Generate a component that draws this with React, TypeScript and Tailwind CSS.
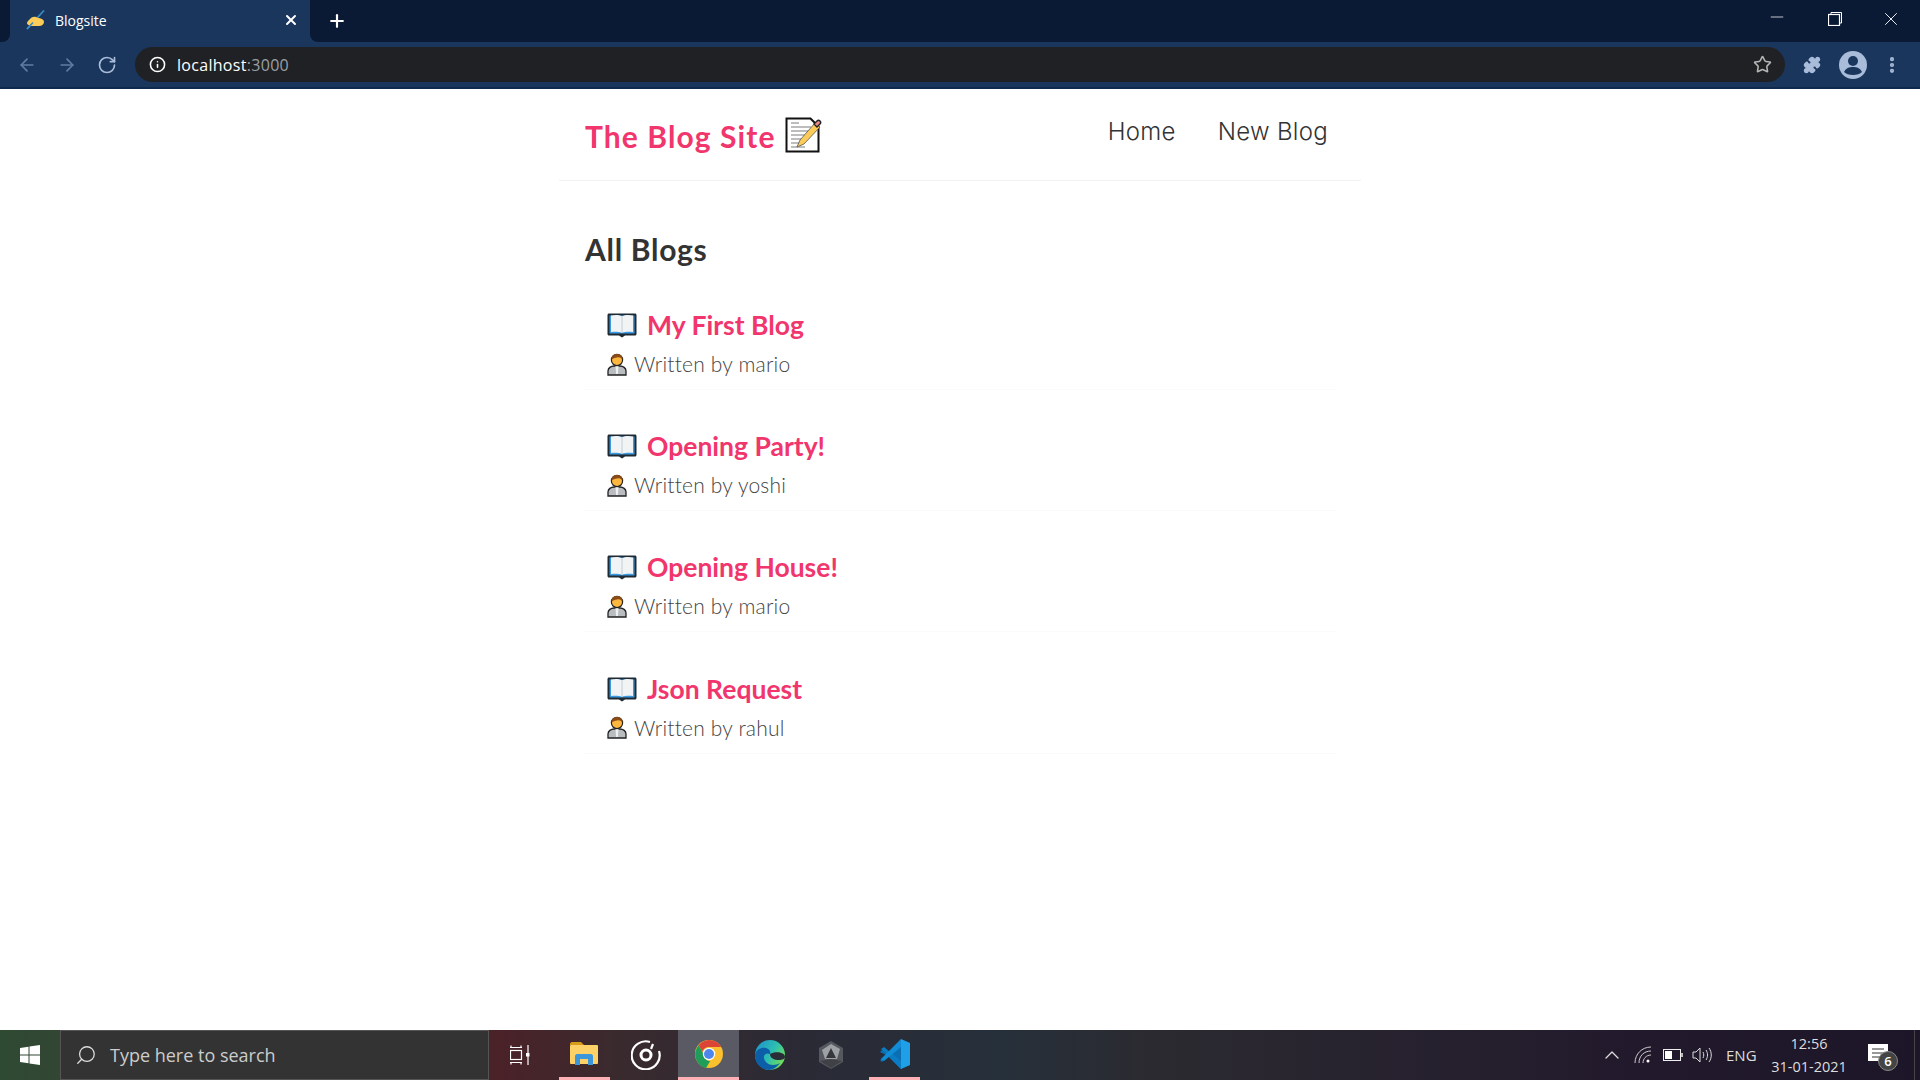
import React from "react";
import {
  ArrowLeft,
  ArrowRight,
  RotateCw,
  Info,
  Star,
  Puzzle,
  EllipsisVertical,
  X,
  Plus,
  Minus,
  ChevronUp,
  Search,
} from "lucide-react";

const blogs = [
  { id: 1, title: "My First Blog", author: "mario" },
  { id: 2, title: "Opening Party!", author: "yoshi" },
  { id: 3, title: "Opening House!", author: "mario" },
  { id: 4, title: "Json Request", author: "rahul" },
];

const WritingHand = () => (
  <svg width="20" height="20" viewBox="0 0 20 20">
    <path d="M1 19 L18 0.5" stroke="#3b88c3" strokeWidth="1.8" />
    <path
      d="M3 10c2-3 5-4 7-3l2 1c2 0 6 1 6 4 0 2-2 4-5 4H7c-3 0-6-1-6-3 0-1 1-2 2-3z"
      fill="#fdcb58"
    />
    <path d="M1 19 L7 12.5" stroke="#3b88c3" strokeWidth="1.6" />
  </svg>
);

const MemoEmoji = () => (
  <svg width="37" height="36" viewBox="0 0 37 36">
    <path d="M1.5 1.5h24l8 8v25h-32z" fill="#fff" stroke="#111" strokeWidth="2" />
    <g stroke="#a8a8a8" strokeWidth="1.5">
      <path d="M6 6h8M6 10h20M6 14h22M6 18h14M6 22h12M6 26h10M6 30h14" />
    </g>
    <path d="M12 30l3-7L30 6l5 4-16 17z" fill="#fdcb58" stroke="#555" strokeWidth="0.8" />
    <path d="M29 7l3-3c1-1 2-1 3 0s1 2 0 3l-3 3z" fill="#ea8a8a" stroke="#222" strokeWidth="1.4" />
  </svg>
);

const BookEmoji = () => (
  <svg width="30" height="26" viewBox="0 0 30 26">
    <path d="M2 1.500h26c.8 0 1.500.7 1.500 1.500v19c0 .8-.7 1.500-1.500 1.500H18l-3 2-3-2H2c-.8 0-1.500-.7-1.500-1.500V3c0-.8.7-1.500 1.500-1.500z" fill="#1f2a33" />
    <path d="M2.500 3.500h25v18h-25z" fill="#3b9ae1" />
    <path d="M4 3.500c4-.8 8-.8 11 .8 3-1.600 7-1.600 11-.8v16.500c-4-.6-8-.4-11 .8-3-1.200-7-1.400-11-.8z" fill="#f1f3f5" />
    <path d="M15 4.300v16.500" stroke="#c3ccd3" strokeWidth="1" />
  </svg>
);

const PersonEmoji = () => (
  <svg width="20" height="23" viewBox="0 0 20 23">
    <path d="M1 22v-4c0-3 3-5 6-5h6c3 0 6 2 6 5v4z" fill="#b9bdc0" stroke="#222" strokeWidth="1.3" />
    <path d="M8.500 13h3l-.6 8h-1.800z" fill="#eef0f0" />
    <circle cx="10" cy="7" r="5.600" fill="#fdb73f" stroke="#222" strokeWidth="1.200" />
    <path d="M4.500 6.500C4 3 7 1 10 1s6 2 5.500 5.500C14 4.500 12 4 10 4.500 8 5 6 5 4.500 6.500z" fill="#8a4b16" />
  </svg>
);

const ChromeLogo = () => (
  <svg width="28" height="28" viewBox="0 0 28 28">
    <circle cx="14" cy="14" r="14" fill="#fbc02d" />
    <path d="M14 0a14 14 0 0 1 12.100 7H14a7 7 0 0 0-6.600 4.700L3.600 5.200A14 14 0 0 1 14 0z" fill="#db4437" />
    <path d="M3.600 5.200l6 10.600a5 5 0 0 0 5.600 5.100L11 28a14 14 0 0 1-7.400-22.800z" fill="#1e9e58" />
    <circle cx="14" cy="14" r="6.200" fill="#fff" />
    <circle cx="14" cy="14" r="5" fill="#4f86ec" />
  </svg>
);

const EdgeLogo = () => (
  <svg width="30" height="30" viewBox="0 0 30 30">
    <defs>
      <linearGradient id="edgeA" x1="0" y1="0" x2="1" y2="0.6">
        <stop offset="0" stopColor="#1b8fd3" />
        <stop offset="0.6" stopColor="#2dbfb0" />
        <stop offset="1" stopColor="#6fdc5a" />
      </linearGradient>
    </defs>
    <circle cx="15" cy="15" r="15" fill="url(#edgeA)" />
    <path d="M0 15c1-6 7-8 11-7 3 1 5 3 4 6-2-1-5-1-6 2-1 5 4 9 9 9 3 0 5-1 7-2-3 4-7 7-11 7C6 30 0 23 0 15z" fill="#0c5ea8" />
    <path d="M15 14c5-3 15-2 15 3 0 2-3 3-6 3-5 0-9-2-9-6z" fill="#2a2c38" />
  </svg>
);

const VsCodeLogo = () => (
  <svg width="30" height="30" viewBox="0 0 30 30">
    <path d="M21 0l9 4v22l-9 4-12-13 12-9V8z" fill="#1e9fe8" />
    <path d="M21 0v30L2 11l-2 2 6 3-6 5 2 2 7-6 12 13 0-7L12 15l9-7z" fill="#0b6fb3" />
    <path d="M1 10l3-2 17 14v8z" fill="#0a7cc4" />
    <path d="M1 20l3 2L21 8V0z" fill="#108dd6" />
  </svg>
);

const FolderLogo = () => (
  <svg width="28" height="24" viewBox="0 0 28 24">
    <path d="M0 2c0-1 1-2 2-2h9l3 3H0z" fill="#d99c18" />
    <rect x="0" y="3" width="28" height="19" rx="1" fill="#fcd268" />
    <path d="M5 23v-9c0-1 1-2 2-2h14c1 0 2 1 2 2v9h-5v-6h-8v6z" fill="#3b97d9" />
  </svg>
);

const GameLogo = () => (
  <svg width="28" height="28" viewBox="0 0 28 28">
    <path d="M14 0l12 7v14l-12 7-12-7V7z" fill="#55585e" />
    <path d="M14 3l9 5-3 10H8L5 9z" fill="#9ea2a6" />
    <path d="M14 7l5 10H9z" fill="#35373d" />
    <path d="M3 20l11 7 11-7-11-2z" fill="#3f4147" />
  </svg>
);

const App = () => {
  return (
    <div className="flex h-screen flex-col overflow-hidden bg-white font-['Lato',sans-serif]">
      {/* browser chrome */}
      <div className="bg-[#1a365d]">
        <div className="flex h-[42px]">
          <div className="w-[10px] rounded-br-lg bg-[#0a1a35]" />
          <div className="flex w-[300px] items-center rounded-t-lg pb-[2px] pl-[16px] pr-[11px]">
            <WritingHand />
            <span className="ml-[9px] flex-1 font-['Open_Sans',sans-serif] text-[14px] text-white">Blogsite</span>
            <X className="h-[16px] w-[16px] text-white" strokeWidth={3} />
          </div>
          <div className="flex flex-1 items-center rounded-bl-lg bg-[#0a1a35] pl-[17px]">
            <Plus className="h-[20px] w-[20px] text-white" strokeWidth={2.6} />
            <div className="ml-auto flex h-full items-start pr-[1px] text-white">
              <div className="flex w-[58px] justify-center pt-[7px]">
                <Minus className="h-[20px] w-[20px]" strokeWidth={0.9} />
              </div>
              <div className="flex w-[57px] justify-center pt-[12px]">
                <svg width="14" height="14" viewBox="0 0 14 14" fill="none" stroke="currentColor">
                  <rect x="0.5" y="2.5" width="11" height="11" strokeWidth="1.2" />
                  <path d="M3 2.500V.5h10.500v10.500h-2" strokeWidth="1" />
                </svg>
              </div>
              <div className="flex w-[56px] justify-center pt-[8px]">
                <X className="h-[22px] w-[22px]" strokeWidth={1} />
              </div>
            </div>
          </div>
        </div>
        <div className="flex h-[45px] items-center">
          <div className="flex w-[135px] items-center pl-[17px]">
            <ArrowLeft className="h-[20px] w-[20px] text-[#5f7da3]" strokeWidth={2} />
            <ArrowRight className="ml-[20px] h-[20px] w-[20px] text-[#5f7da3]" strokeWidth={2} />
            <RotateCw className="ml-[20px] h-[20px] w-[20px] text-[#a9bcd9]" strokeWidth={2} />
          </div>
          <div className="flex h-[35px] w-[1650px] items-center rounded-full bg-[#202124] pl-[14px] pr-[13px]">
            <Info className="h-[17px] w-[17px] text-white" strokeWidth={2.2} />
            <span className="ml-[11px] flex-1 font-['Open_Sans',sans-serif] text-[16px] tracking-[0.3px] text-white">
              localhost<span className="text-[#9aa0a6]">:3000</span>
            </span>
            <Star className="h-[19px] w-[19px] text-[#b5b5b5]" strokeWidth={2} />
          </div>
          <div className="flex flex-1 items-center pl-[18px]">
            <Puzzle className="h-[18px] w-[18px] fill-[#a9bcd9] text-[#a9bcd9]" />
            <svg className="ml-[18px]" width="28" height="28" viewBox="0 0 28 28">
              <circle cx="14" cy="14" r="14" fill="#a9bcd9" />
              <circle cx="14" cy="10" r="5" fill="#1a365d" />
              <path d="M5 21c2-4 5-5 9-5s7 1 9 5c-2 2-5 3-9 3s-7-1-9-3z" fill="#1a365d" />
            </svg>
            <EllipsisVertical className="ml-[15px] h-[20px] w-[20px] text-[#a9bcd9]" strokeWidth={3} />
          </div>
        </div>
        <div className="h-[2px] bg-[#102a4d]" />
      </div>

      {/* page */}
      <div className="flex-1">
        <div className="mx-auto w-[802px]">
          <nav className="flex h-[92px] items-start justify-between border-b border-[#f2f2f2] pl-[26px] pr-[33px]">
            <h1 className="mt-[28px] flex items-center text-[30px] font-bold leading-[38px] tracking-[1.1px] text-[#f1356d]">
              The Blog Site
              <span className="ml-[9px] -mt-[2px]"><MemoEmoji /></span>
            </h1>
            <div className="mt-[27px] flex gap-[42px] font-['Inter',sans-serif] text-[24px] font-light leading-[32px] tracking-[0.3px] text-[#333]">
              <a>Home</a>
              <a>New Blog</a>
            </div>
          </nav>
          <main className="px-[25px] pt-[49px]">
            <h2 className="ml-[1px] text-[30px] font-bold leading-[38px] tracking-[0.7px] text-[#333]">All Blogs</h2>
            <div className="mt-[41px]">
              {blogs.map((blog) => (
                <div key={blog.id} className="mb-[40.2px] border-b border-[#fafafa] px-[23px] pb-[13px]">
                  <div className="flex h-[32px] items-center">
                    <BookEmoji />
                    <h3 className="ml-[10px] text-[26.5px] font-bold leading-[32px] text-[#f1356d]">{blog.title}</h3>
                  </div>
                  <div className="mt-[11px] flex h-[24px] items-center">
                    <PersonEmoji />
                    <p className="ml-[7px] text-[21px] font-light leading-[24px] tracking-[0.2px] text-[#444]">Written by {blog.author}</p>
                  </div>
                </div>
              ))}
            </div>
          </main>
        </div>
      </div>

      {/* taskbar */}
      <div className="flex h-[50px] items-stretch bg-[linear-gradient(90deg,#2f4a33_0%,#3a3a34_12%,#4a2228_26%,#3a2a2e_32%,#2a2a35_42%,#26303a_52%,#2b2a30_60%,#221a2c_85%,#1c1628_100%)] font-['Open_Sans',sans-serif] text-white">
        <div className="flex w-[60px] items-center justify-center">
          <svg width="20" height="20" viewBox="0 0 20 20" fill="#fff">
            <path d="M0 3l8.500-1.300V9.500H0zM9.500 1.500L20 0v9.500H9.500zM0 10.500h8.500v7.800L0 17zM9.500 10.500H20V20L9.500 18.500z" />
          </svg>
        </div>
        <div className="flex w-[429px] items-center border border-[#555] bg-[#333] pl-[14px]">
          <Search className="h-[22px] w-[22px] -scale-x-100 text-[#ddd]" strokeWidth={1.4} />
          <span className="ml-[13px] text-[18px] text-[#ccc]">Type here to search</span>
        </div>
        <div className="flex w-[70px] items-center pl-[21px]">
          <svg width="20" height="20" viewBox="0 0 20 20" fill="none" stroke="#fff" strokeWidth="1.2">
            <path d="M0 2.500h12M0 17.500h12M1 0.500v2M11 0.500v2M1 17.500v2M11 17.500v2" />
            <rect x="0.5" y="5.5" width="11" height="9" />
            <path d="M18 0v20" strokeWidth="1.2" />
            <rect x="16" y="8" width="3.5" height="3.5" fill="#fff" stroke="none" />
          </svg>
        </div>
        <div className="flex w-[51px] items-center justify-center border-b-[3px] border-[#ffb0b4] pr-[2px]">
          <FolderLogo />
        </div>
        <div className="flex w-[68px] items-center justify-center pl-[4px]">
          <svg width="30" height="30" viewBox="0 0 30 30" fill="none" stroke="#fff" strokeWidth="2.2">
            <path d="M19 2a14 14 0 1 0 9 9" />
            <circle cx="15" cy="15" r="5" strokeWidth="3" />
            <path d="M22 4l-2 5" />
          </svg>
        </div>
        <div className="flex w-[61px] items-center justify-center border-b-[3px] border-[#ffb0b4] bg-[#5a5a64]">
          <ChromeLogo />
        </div>
        <div className="flex w-[62px] items-center justify-center">
          <EdgeLogo />
        </div>
        <div className="flex w-[68px] items-center justify-center pr-[8px]">
          <GameLogo />
        </div>
        <div className="flex w-[51px] items-center justify-center border-b-[3px] border-[#ffb0b4]">
          <VsCodeLogo />
        </div>
        <div className="flex flex-1 items-center justify-end">
          <ChevronUp className="h-[24px] w-[24px] text-[#ddd]" strokeWidth={1.3} />
          <svg className="ml-[10px]" width="18" height="18" viewBox="0 0 18 18" fill="none" stroke="#ccc" strokeWidth="1">
            <path d="M1 17C1 8 8 1 17 1M5 17c0-7 5-12 12-12M9 17c0-4 3-8 8-8" />
            <circle cx="14" cy="15" r="1.5" fill="#fff" stroke="none" />
          </svg>
          <svg className="ml-[11px]" width="20" height="12" viewBox="0 0 20 12" fill="none" stroke="#eee" strokeWidth="1">
            <rect x="0.5" y="0.5" width="17" height="11" />
            <rect x="2" y="2" width="7" height="8" fill="#fff" stroke="none" />
            <path d="M19 4v4" strokeWidth="1.5" />
          </svg>
          <svg className="ml-[9px]" width="21" height="16" viewBox="0 0 21 16" fill="none" stroke="#ddd" strokeWidth="1">
            <path d="M1 5h3l4-4v14l-4-4H1z" />
            <path d="M11 5c1 2 1 4 0 6M14 3c2 3 2 7 0 10M17 1c3 4 3 10 0 14" />
          </svg>
          <span className="ml-[13px] w-[36px] text-[15px] text-[#ddd]">ENG</span>
          <div className="ml-[8px] flex w-[78px] flex-col items-center text-[14.5px] leading-[23px] text-[#ddd]">
            <span>12:56</span>
            <span>31-01-2021</span>
          </div>
          <div className="relative ml-[20px] mr-[26px] h-[22px] w-[20px] self-center">
            <svg width="20" height="20" viewBox="0 0 20 20">
              <path d="M0 0h20v17H0z" fill="#fff" />
              <path d="M4 5h12M4 9h12M4 13h8" stroke="#333" strokeWidth="1" />
            </svg>
            <span className="absolute -bottom-[5px] -right-[10px] flex h-[20px] w-[20px] items-center justify-center rounded-full border border-[#888] bg-[#444] text-[13px] font-semibold leading-none text-white">
              6
            </span>
          </div>
          <div className="h-full w-px bg-[#444]" />
          <div className="w-[5px]" />
        </div>
      </div>
    </div>
  );
};

export default App;
